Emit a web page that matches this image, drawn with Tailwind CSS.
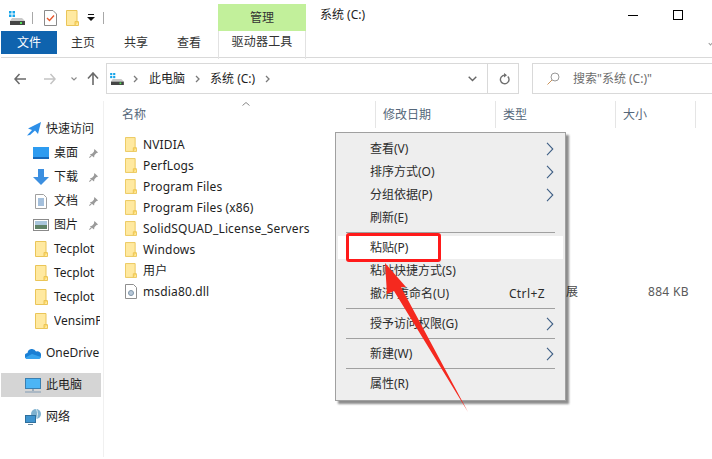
<!DOCTYPE html>
<html lang="zh">
<head>
<meta charset="UTF-8">
<title>系统 (C:)</title>
<script src="https://cdn.jsdelivr.net/npm/@tailwindcss/browser@4"></script>
</head>
<body class="bg-white">
<svg class="hidden">
  <symbol id="folder" viewBox="0 0 13 16">
    <path d="M.5.5h10.5v11.500h1.500v3.500H.5z" fill="#ffe9a0" stroke="#eac558"/>
    <path d="M9 15.500v-4h3.500" fill="#ffd966" stroke="#eac558"/>
  </symbol>
  <symbol id="pin" viewBox="0 0 12 12">
    <path d="M7 1l4 4-2 .6-2 2.400-.4 2.400L2 6.800l2.400-.5L6.400 4.200z" fill="#9a9a9a"/>
    <path d="M4 8L1.500 10.500" stroke="#9a9a9a" stroke-width="1.200"/>
  </symbol>
  <symbol id="chev" viewBox="0 0 8 14">
    <path d="M1 .8L6.800 7 1 13.200" fill="none" stroke="#3f5f85" stroke-width="1.100"/>
  </symbol>
  <symbol id="crumb" viewBox="0 0 5 8">
    <path d="M1 1l3 3-3 3" fill="none" stroke="#7a7a7a" stroke-width="1.300"/>
  </symbol>
  <symbol id="drive" viewBox="0 0 16 14">
    <rect x="0" y="0" width="2.500" height="2.500" fill="#16a5ea"/><rect x="3.500" y="0" width="2.500" height="2.500" fill="#16a5ea"/>
    <rect x="0" y="3.500" width="2.500" height="2.500" fill="#16a5ea"/><rect x="3.500" y="3.500" width="2.500" height="2.500" fill="#16a5ea"/>
    <path d="M3 7h10l3 3H1z" fill="#c9c9c9"/><rect x="1" y="10" width="15" height="4" fill="#454545"/><rect x="11" y="11" width="2" height="2" fill="#54e05a"/>
  </symbol>
</svg>

<div class="relative w-[712px] h-[459px] overflow-hidden bg-white text-[12px] leading-none text-[#1e1e1e] font-['Noto_Sans','Noto_Sans_CJK_SC',sans-serif]">

  <!-- title row -->
  <div class="flex h-[31px]">
    <div class="flex items-center w-[218px] pl-[9px] pt-[4px]">
      <svg class="w-[16px] h-[14px]"><use href="#drive"/></svg>
      <div class="ml-[7px] w-px h-[12px] bg-[#a8a8a8]"></div>
      <svg class="ml-[11px] w-[13px] h-[16px]" viewBox="0 0 13 16"><path d="M.5.500h8.500l3.500 3.500v11.500H.5z" fill="#fff" stroke="#8a8a8a"/><path d="M3 8l2.500 2.500L10 5.500" fill="none" stroke="#e8582c" stroke-width="1.400"/></svg>
      <svg class="ml-[9px] w-[13px] h-[16px]"><use href="#folder"/></svg>
      <svg class="ml-[8px] w-[8px] h-[8px]" viewBox="0 0 8 8"><path d="M1 0h6v1H1zM0 3h8L4 7z" fill="#111"/></svg>
      <div class="ml-[8px] w-px h-[12px] bg-[#a8a8a8]"></div>
    </div>
    <div class="mt-[4px] w-[88px] h-[27px] bg-[#c2f09b] flex items-center justify-center text-[#333]">管理</div>
    <div class="ml-[14px] pt-[9px] text-[#222]">系统 (C:)</div>
    <div class="ml-auto flex pr-[29px] pt-[10px]">
      <div class="mt-[5px] w-[10px] h-px bg-black"></div>
      <div class="ml-[35px] w-[10px] h-[10px] border border-black"></div>
    </div>
  </div>

  <!-- ribbon tabs -->
  <div class="relative flex h-[23px] items-center text-[#333]">
    <div class="ml-px w-[56px] h-full bg-[#0f63ae] text-white flex items-center justify-center">文件</div>
    <div class="ml-[14px]">主页</div>
    <div class="ml-[29px]">共享</div>
    <div class="ml-[29px]">查看</div>
    <div class="ml-[17px] w-[88px] h-[28px] self-start border-x border-[#e2e2e2] flex items-center justify-center pb-[6px] tracking-[0.2px]">驱动器工具</div>
    <div class="absolute right-0 top-[11px] w-[3px] h-[3px] border-b border-l border-[#999] -rotate-45"></div>
  </div>

  <div class="mt-[3px] ml-px h-px bg-[#d9d9d9]"></div>

  <!-- address row -->
  <div class="flex items-center h-[31px] mt-[5px]">
    <svg class="ml-[14px] w-[12px] h-[12px]" viewBox="0 0 12 12"><path d="M5.500 1L1 6l4.500 5M1 6h11" fill="none" stroke="#6a6a6a" stroke-width="1.500"/></svg>
    <svg class="ml-[18px] w-[12px] h-[12px]" viewBox="0 0 12 12"><path d="M6.500 1L11 6l-4.500 5M11 6H0" fill="none" stroke="#c4c4c4" stroke-width="1.500"/></svg>
    <svg class="ml-[15px] w-[6px] h-[4px]" viewBox="0 0 6 4"><path d="M.5.500L3 3 5.500.5" fill="none" stroke="#8a8a8a" stroke-width="1.100"/></svg>
    <svg class="ml-[10px] w-[12px] h-[13px]" viewBox="0 0 12 13"><path d="M1 6.500L6 1l5 5.500M6 1v12" fill="none" stroke="#6a6a6a" stroke-width="1.600"/></svg>
    <div class="ml-[7px] w-[413px] h-[31px] border border-[#d9d9d9] flex items-center">
      <svg class="ml-[3px] w-[14px] h-[12px]"><use href="#drive"/></svg>
      <svg class="ml-[9px] w-[5px] h-[8px]"><use href="#crumb"/></svg>
      <span class="ml-[11px]">此电脑</span>
      <svg class="ml-[10px] w-[5px] h-[8px]"><use href="#crumb"/></svg>
      <span class="ml-[10px]">系统 (C:)</span>
      <svg class="ml-[10px] w-[5px] h-[8px]"><use href="#crumb"/></svg>
      <svg class="ml-auto mr-[10px] w-[9px] h-[6px]" viewBox="0 0 9 6"><path d="M.7.700L4.500 4.500 8.300.7" fill="none" stroke="#666" stroke-width="1.400"/></svg>
      <div class="w-[31px] h-full border-l border-[#d9d9d9] flex items-center justify-center pl-[2px]">
        <svg class="w-[11px] h-[12px]" viewBox="0 0 11 12"><path d="M8.800 3.500a4.300 4.300 0 1 1-3-1.300H7" fill="none" stroke="#707070" stroke-width="1.400"/><path d="M5 0l3 2.200-3 2.200z" fill="#707070"/></svg>
      </div>
    </div>
    <div class="ml-[13px] flex-1 h-[31px] border-y border-l border-[#d9d9d9] flex items-center text-[#6d6d6d]">
      <svg class="ml-[14px] w-[13px] h-[13px]" viewBox="0 0 13 13"><circle cx="8" cy="5" r="4" fill="none" stroke="#999"/><path d="M5 8l-4.500 4.500" stroke="#c9925a"/></svg>
      <span class="ml-[13px]">搜索"系统 (C:)"</span>
    </div>
  </div>

  <!-- body -->
  <div class="flex mt-[7px]">
    <!-- nav pane -->
    <div class="w-[104px] h-[356px] border-r border-[#f0f0f0] pt-[16px]">
      <div class="flex items-center h-[24px] pl-[27px] gap-[5px]">
        <svg class="w-[14px] h-[14px]" viewBox="0 0 14 14"><path d="M14 0l-3 12-3-3.500L3 13l-3 .5L5 8 1 6.500z" fill="#2d8fe8"/></svg>
        <span>快速访问</span>
      </div>
      <div class="flex items-center h-[24px] pl-[33px]">
        <div class="w-[16px] h-[12px] bg-[#2d9bf0] border-b-2 border-[#1566b8]"></div>
        <span class="ml-[5px]">桌面</span>
        <svg class="ml-[10px] w-[11px] h-[11px]"><use href="#pin"/></svg>
      </div>
      <div class="flex items-center h-[24px] pl-[33px]">
        <svg class="w-[16px] h-[16px]" viewBox="0 0 16 16"><path d="M5 0h6v8h5l-8 8-8-8h5z" fill="#3c8fe0"/></svg>
        <span class="ml-[5px]">下载</span>
        <svg class="ml-[10px] w-[11px] h-[11px]"><use href="#pin"/></svg>
      </div>
      <div class="flex items-center h-[24px] pl-[35px]">
        <svg class="w-[12px] h-[15px]" viewBox="0 0 12 15"><path d="M.5.500h8l3 3v11H.500z" fill="#fff" stroke="#a0a0a0"/><path d="M3 5h6M3 7h6M3 9h6M3 11h6" stroke="#4a80b8"/></svg>
        <span class="ml-[7px]">文档</span>
        <svg class="ml-[10px] w-[11px] h-[11px]"><use href="#pin"/></svg>
      </div>
      <div class="flex items-center h-[24px] pl-[33px]">
        <svg class="w-[16px] h-[12px]" viewBox="0 0 16 12"><rect x=".5" y=".5" width="15" height="11" fill="#fff" stroke="#8a8a8a"/><rect x="2" y="2" width="12" height="4" fill="#a9c6dc"/><rect x="2" y="6" width="12" height="4" fill="#5f8266"/></svg>
        <span class="ml-[5px]">图片</span>
        <svg class="ml-[10px] w-[11px] h-[11px]"><use href="#pin"/></svg>
      </div>
      <div class="flex items-center h-[24px] pl-[35px]"><svg class="w-[13px] h-[16px]"><use href="#folder"/></svg><span class="ml-[6px]">Tecplot</span></div>
      <div class="flex items-center h-[24px] pl-[35px]"><svg class="w-[13px] h-[16px]"><use href="#folder"/></svg><span class="ml-[6px]">Tecplot</span></div>
      <div class="flex items-center h-[24px] pl-[35px]"><svg class="w-[13px] h-[16px]"><use href="#folder"/></svg><span class="ml-[6px]">Tecplot</span></div>
      <div class="flex items-center h-[24px] pl-[35px] overflow-hidden whitespace-nowrap"><svg class="w-[13px] h-[16px] shrink-0"><use href="#folder"/></svg><span class="ml-[6px] w-[46px] overflow-hidden">VensimPLE</span></div>
      <div class="flex items-center h-[24px] mt-[8px] pl-[25px] gap-[5px] overflow-hidden">
        <svg class="w-[16px] h-[11px] shrink-0" viewBox="0 0 16 11"><path d="M3 11a3 3 0 0 1-.5-6A4.500 4.500 0 0 1 11 3.500 3.800 3.800 0 0 1 16 8c0 2-1.500 3-3 3z" fill="#1a7fd4"/><path d="M3 11c-1 0-2-.5-2.500-1.500L7 6l9 3c-.5 1.500-1.500 2-3 2z" fill="#36a3ee"/></svg>
        <span>OneDrive</span>
      </div>
      <div class="flex items-center h-[24px] mt-[8px] ml-px w-[100px] pl-[24px] gap-[5px] bg-[#d5d5d5]">
        <svg class="w-[16px] h-[15px]" viewBox="0 0 16 15"><rect x=".5" y=".5" width="15" height="10" fill="#4cb5f5" stroke="#3a7fb0"/><path d="M7 11h2v2H7z" fill="#9ab"/><path d="M0 14h16" stroke="#8fa6ba" stroke-width="1.200"/></svg>
        <span>此电脑</span>
      </div>
      <div class="flex items-center h-[24px] mt-[8px] pl-[25px] gap-[5px]">
        <svg class="w-[16px] h-[16px]" viewBox="0 0 16 16"><circle cx="11" cy="5" r="5" fill="#7fb2d0"/><path d="M11 0c2 2 2 8 0 10" stroke="#d8e8f0" fill="none"/><rect x=".5" y="6.500" width="10" height="7" fill="#3f94cf" stroke="#2f6f9c"/><path d="M3 15.500h5" stroke="#6a8aa0"/></svg>
        <span>网络</span>
      </div>
    </div>

    <!-- file list -->
    <div class="flex-1">
      <div class="relative flex h-[27px] items-center text-[#55677a]">
        <div class="w-[272px] pl-[18px] border-r border-[#e5e5e5] h-full flex items-center">名称</div>
        <div class="w-[120px] pl-[7px] border-r border-[#e5e5e5] h-full flex items-center">修改日期</div>
        <div class="w-[120px] pl-[7px] border-r border-[#e5e5e5] h-full flex items-center">类型</div>
        <div class="w-[80px] pl-[7px] border-r border-[#e5e5e5] h-full flex items-center">大小</div>
        <svg class="absolute left-[138px] top-[1px] w-[8px] h-[4px]" viewBox="0 0 8 4"><path d="M.5 3.500L4 .5l3.500 3" fill="none" stroke="#888"/></svg>
      </div>
      <div class="pt-[6px] pl-[21px] tracking-[0.15px]">
        <div class="flex items-center h-[21px] gap-[6px]"><svg class="w-[12px] h-[15px]"><use href="#folder"/></svg>NVIDIA</div>
        <div class="flex items-center h-[21px] gap-[6px]"><svg class="w-[12px] h-[15px]"><use href="#folder"/></svg>PerfLogs</div>
        <div class="flex items-center h-[21px] gap-[6px]"><svg class="w-[12px] h-[15px]"><use href="#folder"/></svg>Program Files</div>
        <div class="flex items-center h-[21px] gap-[6px]"><svg class="w-[12px] h-[15px]"><use href="#folder"/></svg>Program Files (x86)</div>
        <div class="flex items-center h-[21px] gap-[6px]"><svg class="w-[12px] h-[15px]"><use href="#folder"/></svg>SolidSQUAD_License_Servers</div>
        <div class="flex items-center h-[21px] gap-[6px]"><svg class="w-[12px] h-[15px]"><use href="#folder"/></svg>Windows</div>
        <div class="flex items-center h-[21px] gap-[6px]"><svg class="w-[12px] h-[15px]"><use href="#folder"/></svg>用户</div>
        <div class="relative flex items-center h-[21px] gap-[6px]">
          <svg class="w-[12px] h-[15px]" viewBox="0 0 12 15"><path d="M.5.500h8l3 3v11H.500z" fill="#fff" stroke="#8f8f8f"/><circle cx="6" cy="9" r="2.500" fill="#b8c8d8" stroke="#7f95a8"/></svg>
          msdia80.dll
          <span class="absolute left-[441px] text-[#4a4a4a]">展</span>
          <span class="absolute left-[523px] text-[#5a5a5a] tracking-[0.3px]">884 KB</span>
        </div>
      </div>
    </div>
  </div>

  <!-- context menu -->
  <div class="absolute left-[335px] top-[132px] w-[231px] h-[269px] bg-[#eeeeee] border border-[#a0a0a0] shadow-[3px_3px_2px_rgba(0,0,0,0.45)] pt-[4px] pl-[2px] pr-[2px] text-[#2c2c2c]">
    <div class="flex items-center h-[23px] pl-[32px] pr-[9px]">查看(V)<svg class="ml-auto w-[8px] h-[14px]"><use href="#chev"/></svg></div>
    <div class="flex items-center h-[23px] pl-[32px] pr-[9px]">排序方式(O)<svg class="ml-auto w-[8px] h-[14px]"><use href="#chev"/></svg></div>
    <div class="flex items-center h-[23px] pl-[32px] pr-[9px]">分组依据(P)<svg class="ml-auto w-[8px] h-[14px]"><use href="#chev"/></svg></div>
    <div class="flex items-center h-[23px] pl-[32px]">刷新(E)</div>
    <div class="mx-[8px] my-[3px] h-px bg-[#a0a0a0]"></div>
    <div class="flex items-center h-[23px] pl-[32px] bg-white">粘贴(P)</div>
    <div class="flex items-center h-[23px] pl-[32px]">粘贴快捷方式(S)</div>
    <div class="flex items-center h-[23px] pl-[32px] pr-[18px]">撤消 重命名(U)<span class="ml-auto tracking-[0.4px]">Ctrl+Z</span></div>
    <div class="mx-[8px] my-[3px] h-px bg-[#a0a0a0]"></div>
    <div class="flex items-center h-[23px] pl-[32px] pr-[9px]">授予访问权限(G)<svg class="ml-auto w-[8px] h-[14px]"><use href="#chev"/></svg></div>
    <div class="mx-[8px] my-[3px] h-px bg-[#a0a0a0]"></div>
    <div class="flex items-center h-[23px] pl-[32px] pr-[9px]">新建(W)<svg class="ml-auto w-[8px] h-[14px]"><use href="#chev"/></svg></div>
    <div class="mx-[8px] my-[3px] h-px bg-[#a0a0a0]"></div>
    <div class="flex items-center h-[23px] pl-[32px]">属性(R)</div>
  </div>

  <!-- red annotation -->
  <div class="absolute left-[346px] top-[233px] w-[95px] h-[29px] border-[3px] border-[#ff1a1a] rounded-[3px]"></div>
  <svg class="absolute left-0 top-0 w-[712px] h-[459px] pointer-events-none" viewBox="0 0 712 459">
    <path d="M385 263L406 287 401 287 468 412 394 291 387 294z" fill="#f5291f"/>
  </svg>
</div>
</body>
</html>
